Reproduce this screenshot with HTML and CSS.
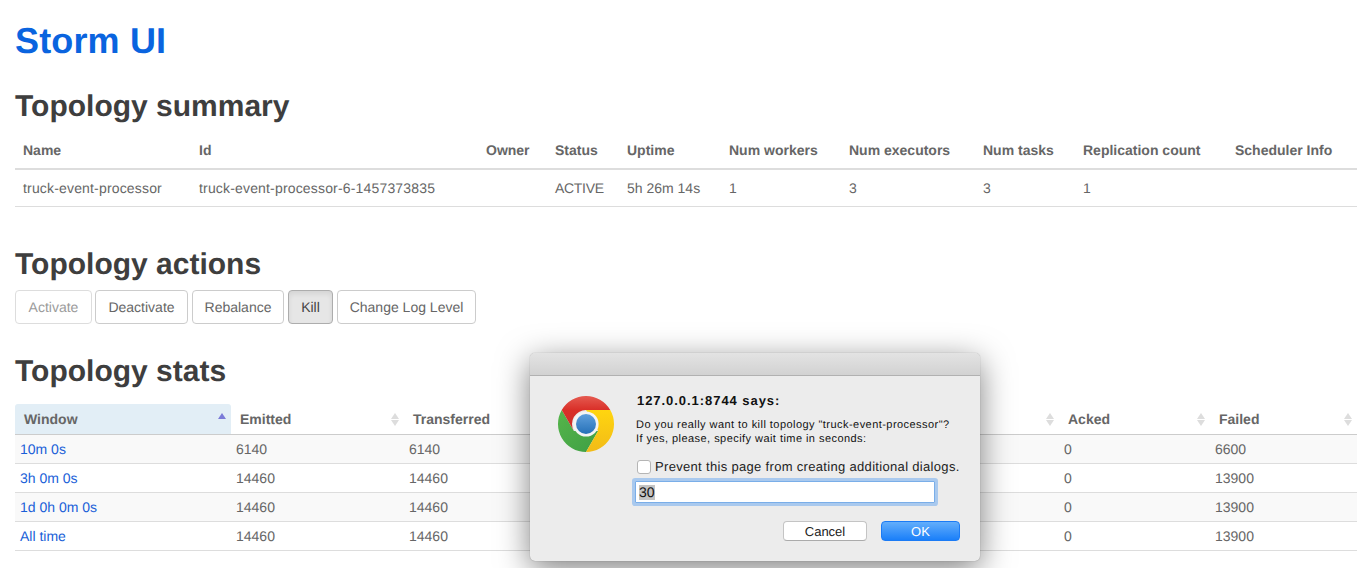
FILE: index.html
```html
<!DOCTYPE html>
<html>
<head>
  <meta charset="utf-8">
  <title>Storm UI</title>
  <link rel="stylesheet" href="styles.css">
</head>
<body>
  <div class="page">
    <h1>Storm UI</h1>

    <!-- SUMMARY -->
    <h2 class="summary-title">Topology summary</h2>
    <table class="summary">
      <thead>
        <tr>
          <th>Name</th>
          <th>Id</th>
          <th>Owner</th>
          <th>Status</th>
          <th>Uptime</th>
          <th>Num workers</th>
          <th>Num executors</th>
          <th>Num tasks</th>
          <th>Replication count</th>
          <th>Scheduler Info</th>
        </tr>
      </thead>
      <tbody>
        <tr>
          <td>truck-event-processor</td>
          <td>truck-event-processor-6-1457373835</td>
          <td></td>
          <td>ACTIVE</td>
          <td>5h 26m 14s</td>
          <td>1</td>
          <td>3</td>
          <td>3</td>
          <td>1</td>
          <td></td>
        </tr>
      </tbody>
    </table>

    <!-- ACTIONS -->
    <h2 class="actions-title">Topology actions</h2>
    <div class="actions">
      <button class="btn btn-activate">Activate</button>
      <button class="btn btn-deactivate">Deactivate</button>
      <button class="btn btn-rebalance">Rebalance</button>
      <button class="btn btn-kill">Kill</button>
      <button class="btn btn-log">Change Log Level</button>
    </div>

    <!-- STATS -->
    <h2 class="stats-title">Topology stats</h2>
    <table class="stats">
      <thead>
        <tr>
          <th class="sorted">Window</th>
          <th class="sortable">Emitted</th>
          <th class="sortable">Transferred</th>
          <th class="sortable"></th>
          <th class="sortable">Acked</th>
          <th class="sortable">Failed</th>
        </tr>
      </thead>
      <tbody>
        <tr>
          <td><a href="#">10m 0s</a></td>
          <td>6140</td>
          <td>6140</td>
          <td></td>
          <td>0</td>
          <td>6600</td>
        </tr>
        <tr>
          <td><a href="#">3h 0m 0s</a></td>
          <td>14460</td>
          <td>14460</td>
          <td></td>
          <td>0</td>
          <td>13900</td>
        </tr>
        <tr>
          <td><a href="#">1d 0h 0m 0s</a></td>
          <td>14460</td>
          <td>14460</td>
          <td></td>
          <td>0</td>
          <td>13900</td>
        </tr>
        <tr>
          <td><a href="#">All time</a></td>
          <td>14460</td>
          <td>14460</td>
          <td></td>
          <td>0</td>
          <td>13900</td>
        </tr>
      </tbody>
    </table>
  </div>

  <!-- PROMPT DIALOG -->
  <div class="dialog">
    <div class="dialog-bar"></div>
    <div class="dialog-body">
      <svg class="chrome-icon" viewBox="0 0 56 56" width="56" height="56">
        <defs>
          <linearGradient id="redFill" x1="0" y1="0" x2="0" y2="1">
            <stop offset="0" stop-color="#e55a50"/>
            <stop offset="0.4" stop-color="#d92f28"/>
            <stop offset="1" stop-color="#c9302a"/>
          </linearGradient>
          <linearGradient id="greenFill" x1="0" y1="0" x2="1" y2="1">
            <stop offset="0" stop-color="#55b54a"/>
            <stop offset="1" stop-color="#3f9f45"/>
          </linearGradient>
          <linearGradient id="yellowFill" x1="0" y1="0" x2="0" y2="1">
            <stop offset="0" stop-color="#ffd50f"/>
            <stop offset="1" stop-color="#f2bb18"/>
          </linearGradient>
          <linearGradient id="blueFill" x1="0" y1="0" x2="0" y2="1">
            <stop offset="0" stop-color="#5f9fdc"/>
            <stop offset="1" stop-color="#2671b8"/>
          </linearGradient>
        </defs>
        <path fill="url(#greenFill)" d="M3.75 14A28 28 0 0 0 28 56L40.12 35H15.88Z"/>
        <path fill="url(#yellowFill)" d="M52.25 14H28L40.12 35 28 56A28 28 0 0 0 52.25 14Z"/>
        <path fill="url(#redFill)" d="M3.75 14A28 28 0 0 1 52.25 14H28A14 14 0 0 0 15.88 35Z"/>
        <circle cx="28" cy="28" r="12.6" fill="#f4f4f4"/>
        <circle cx="28" cy="28" r="10" fill="url(#blueFill)"/>
      </svg>
      <div class="dialog-main">
        <div class="dialog-title">127.0.0.1:8744 says:</div>
        <p class="dialog-msg">Do you really want to kill topology "truck-event-processor"?<br>If yes, please, specify wait time in seconds:</p>
        <div class="dialog-check">
          <span class="checkbox"></span>
          <span>Prevent this page from creating additional dialogs.</span>
        </div>
        <div class="prompt"><span class="prompt-sel">30</span></div>
        <div class="dialog-buttons">
          <button class="mac-btn">Cancel</button>
          <button class="mac-btn mac-ok">OK</button>
        </div>
      </div>
    </div>
  </div>
</body>
</html>
```

FILE: styles.css
```css
html, body {
  height: 568px;
  overflow: hidden;
}
body {
  margin: 0;
  font-family: "Liberation Sans", Arial, sans-serif;
  font-size: 14px;
  line-height: 20px;
  color: #666;
  background: #fff;
  text-rendering: geometricPrecision;
}
.page {
  margin: 0 8px 0 15px;
}
h1 {
  margin: 21px 0 29px;
  font-size: 36px;
  line-height: 40px;
  font-weight: bold;
  letter-spacing: 0.15px;
  color: #0a64df;
}
h2 {
  margin: 20px 0 10px;
  font-size: 30px;
  line-height: 33px;
  font-weight: bold;
  color: #3e3e3e;
}
table {
  width: 1342px;
  border-collapse: collapse;
  table-layout: fixed;
}
a {
  color: #1a5fd8;
  text-decoration: none;
}

/* summary table */
.summary-title {
  margin-bottom: 9px;
}
.summary th, .summary td {
  box-sizing: border-box;
  padding: 8px;
  text-align: left;
}
.summary th {
  height: 20px;
  border-bottom: 2px solid #ddd;
}
.summary td {
  border-bottom: 1px solid #ddd;
}
.summary td:nth-child(-n+2) {
  letter-spacing: 0.17px;
}
.summary td:nth-child(4) {
  letter-spacing: -0.3px;
}
.summary th:nth-child(1) { width: 176px; }
.summary th:nth-child(2) { width: 287px; }
.summary th:nth-child(3) { width: 69px; }
.summary th:nth-child(4) { width: 72px; }
.summary th:nth-child(5) { width: 102px; }
.summary th:nth-child(6) { width: 120px; }
.summary th:nth-child(7) { width: 134px; }
.summary th:nth-child(8) { width: 100px; }
.summary th:nth-child(9) { width: 152px; }

/* action buttons */
.actions-title {
  margin-top: 41px;
  margin-bottom: 9px;
}
.actions {
  display: flex;
  gap: 4px;
}
.btn {
  height: 34px;
  padding: 6px 0;
  border: 1px solid #ccc;
  border-radius: 4px;
  background: #fff;
  color: #666;
  font: 14px/20px "Liberation Sans", Arial, sans-serif;
  text-rendering: geometricPrecision;
}
.btn-activate {
  width: 77px;
  margin-right: -1px;
  opacity: 0.65;
}
.btn-deactivate { width: 93px; }
.btn-rebalance { width: 92px; }
.btn-kill {
  width: 45px;
  background: #e6e6e6;
  border-color: #adadad;
  color: #444;
  box-shadow: inset 0 3px 5px rgba(0, 0, 0, 0.08);
}
.btn-log { width: 139px; }

/* stats table */
.stats-title {
  margin-top: 31px;
  margin-bottom: 16px;
}
.stats th, .stats td {
  box-sizing: border-box;
  text-align: left;
}
.stats th {
  position: relative;
  height: 30px;
  padding: 5px 9px;
  border-bottom: 1px solid #ccc;
}
.stats td {
  height: 29px;
  padding: 4px 5px;
  border-bottom: 1px solid #ddd;
}
.stats tbody tr:nth-child(odd) {
  background: #f9f9f9;
}
.stats th:nth-child(1) { width: 216px; }
.stats th:nth-child(2) { width: 173px; }
.stats th:nth-child(3) { width: 173px; }
.stats th:nth-child(4) { width: 482px; }
.stats th:nth-child(5) { width: 151px; }
.stats th.sorted {
  background: #e2eef6;
  border-radius: 3px 3px 0 0;
}
.stats th.sorted::before {
  content: "";
  position: absolute;
  top: 9px;
  right: 5px;
  border: 4.5px solid transparent;
  border-top: 0;
  border-bottom: 6px solid #7b7bd8;
}
.sortable::before, .sortable::after {
  content: "";
  position: absolute;
  right: 5px;
  border: 4px solid transparent;
}
.sortable::before {
  top: 9px;
  border-top: 0;
  border-bottom: 6px solid #ddd;
}
.sortable::after {
  top: 16px;
  border-bottom: 0;
  border-top: 6px solid #ddd;
}

/* prompt dialog, sits over the page */
.dialog {
  position: absolute;
  left: 530px;
  top: 353px;
  width: 450px;
  height: 208px;
  background: #ececec;
  border-radius: 5px;
  box-shadow: 0 0 1px rgba(0, 0, 0, 0.4), 0 8px 32px rgba(0, 0, 0, 0.5);
  color: #111;
}
.dialog-bar {
  height: 22px;
  border-bottom: 1px solid #b1b1b1;
  border-radius: 5px 5px 0 0;
  background: linear-gradient(#e3e3e3, #d2d2d2);
}
.dialog-body {
  display: flex;
}
.chrome-icon {
  flex: none;
  margin: 20px 0 0 28px;
}
.dialog-main {
  margin-left: 22px;
  width: 324px;
}
.dialog-title {
  margin: 17px 0 0 1px;
  font-size: 13px;
  line-height: 16px;
  font-weight: bold;
  letter-spacing: 0.95px;
}
.dialog-msg {
  margin: 9px 0 0;
  font-size: 11px;
  line-height: 14px;
  letter-spacing: 0.45px;
}
.dialog-check {
  display: flex;
  align-items: center;
  gap: 4px;
  margin: 13px 0 0 1px;
  font-size: 13px;
  line-height: 16px;
  letter-spacing: 0.32px;
  white-space: nowrap;
  color: #222;
}
.checkbox {
  box-sizing: border-box;
  width: 14px;
  height: 14px;
  border: 1px solid #b5b5b5;
  border-radius: 3px;
  background: #fff;
}
.prompt {
  box-sizing: border-box;
  width: 300px;
  height: 22px;
  margin: 6px 0 0 -1px;
  padding: 3px;
  border: 1px solid #7aaee8;
  border-radius: 1px;
  box-shadow: 0 0 0 3px #a9c9ee;
  background: #fff;
  font-size: 14px;
  line-height: 15px;
}
.prompt-sel {
  display: inline-block;
  background: #c4c4c4;
}
.dialog-buttons {
  display: flex;
  justify-content: flex-end;
  gap: 14px;
  margin: 18px 0 0;
}
.mac-btn {
  width: 84px;
  height: 20px;
  padding: 1px 0 0;
  border: 1px solid #c4c4c4;
  border-bottom-color: #ababab;
  border-radius: 4px;
  background: #fff;
  color: #222;
  font: 13px/18px "Liberation Sans", Arial, sans-serif;
  text-rendering: geometricPrecision;
}
.mac-ok {
  width: 79px;
  border: 1px solid #1b7bf5;
  background: linear-gradient(#63aefb, #1a7ff9);
  color: #fff;
}
```
